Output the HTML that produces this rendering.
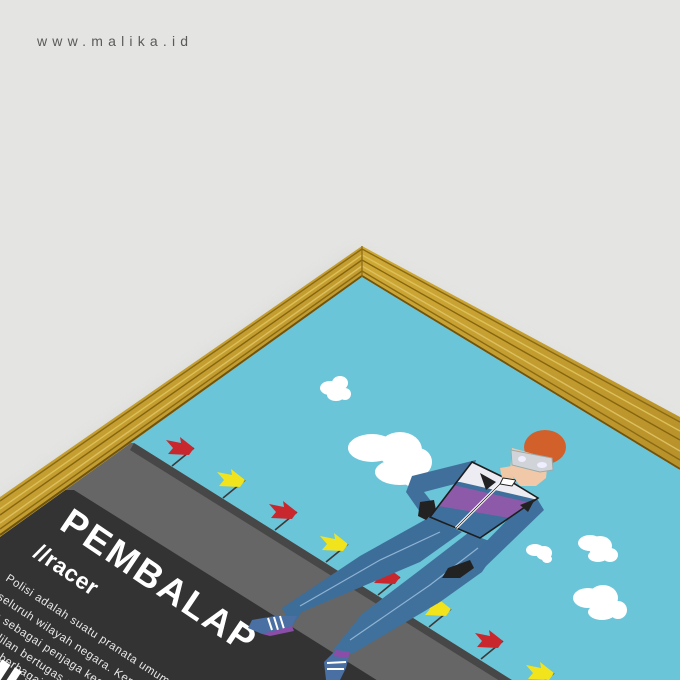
<!DOCTYPE html>
<html><head><meta charset="utf-8"><style>
html,body{margin:0;padding:0;background:#e4e4e2;width:680px;height:680px;overflow:hidden;}
svg{display:block}
</style></head><body>
<svg width="680" height="680" viewBox="0 0 680 680" xmlns="http://www.w3.org/2000/svg">
<defs>
<filter id="blur" x="-20%" y="-20%" width="140%" height="140%"><feGaussianBlur stdDeviation="9"/></filter>
<clipPath id="poster"><polygon points="362,277 680,470 680,680 0,680 0,536"/></clipPath>
<clipPath id="fl"><polygon points="362,246 0,497 0,537 362,277"/></clipPath>
<clipPath id="fr"><polygon points="362,246 680,417 680,470 362,277"/></clipPath>
<clipPath id="torso"><polygon points="472,462 505,478 538,498 480,538 430,517"/></clipPath>
<linearGradient id="gold" x1="0" y1="0" x2="1" y2="1"><stop offset="0" stop-color="#cfa936"/><stop offset="1" stop-color="#b8912a"/></linearGradient>
</defs>
<rect width="680" height="680" fill="#e4e4e2"/>
<text x="37" y="46" font-family="Liberation Sans, sans-serif" font-size="14" letter-spacing="5.2" fill="#5a5a5a">www.malika.id</text>

<polygon points="370,262 680,432 680,500 380,300" fill="#b8b8b6" opacity="0.55" filter="url(#blur)"/>
<polygon points="362,250 0,505 0,560 362,290" fill="#bcbcba" opacity="0.4" filter="url(#blur)"/>

<g clip-path="url(#poster)">
<rect width="680" height="680" fill="#6bc5d8"/>
<g fill="#fff">
<ellipse cx="330" cy="388" rx="10" ry="7"/><ellipse cx="340" cy="383" rx="8" ry="7"/><ellipse cx="345" cy="394" rx="6" ry="6"/><ellipse cx="336" cy="395" rx="9" ry="6"/>
<ellipse cx="372" cy="448" rx="24" ry="14"/><ellipse cx="400" cy="450" rx="22" ry="18"/><ellipse cx="418" cy="462" rx="14" ry="14"/><ellipse cx="400" cy="472" rx="25" ry="13"/><ellipse cx="414" cy="478" rx="12" ry="9"/>
<ellipse cx="535" cy="550" rx="9" ry="6"/><ellipse cx="544" cy="553" rx="8" ry="7"/><ellipse cx="547" cy="559" rx="5" ry="4"/>
<ellipse cx="590" cy="543" rx="12" ry="8"/><ellipse cx="600" cy="546" rx="12" ry="10"/><ellipse cx="610" cy="555" rx="8" ry="7"/><ellipse cx="598" cy="556" rx="10" ry="6"/>
<ellipse cx="588" cy="598" rx="15" ry="10"/><ellipse cx="603" cy="598" rx="15" ry="13"/><ellipse cx="618" cy="610" rx="9" ry="9"/><ellipse cx="602" cy="612" rx="14" ry="8"/>
</g>
<polygon points="134,443 700,798 -200,798 -200,443" fill="#666666"/>
<polygon points="134,443 700,798 700,806 130,450" fill="#474747"/>
<polygon points="74,490 700,883 -200,883 -200,490" fill="#333333"/>
<g>
<g transform="translate(194,446)"><line x1="0" y1="2" x2="-22" y2="20" stroke="#3a3a3a" stroke-width="1.6"/><polygon points="0,2 -14,-9 -13,-3 -28,-6 -21,2 -26,8 -5,9" fill="#c8282d"/></g>
<g transform="translate(245,478)"><line x1="0" y1="2" x2="-22" y2="20" stroke="#3a3a3a" stroke-width="1.6"/><polygon points="0,2 -14,-9 -13,-3 -28,-6 -21,2 -26,8 -5,9" fill="#f1e31c"/></g>
<g transform="translate(297,510)"><line x1="0" y1="2" x2="-22" y2="20" stroke="#3a3a3a" stroke-width="1.6"/><polygon points="0,2 -14,-9 -13,-3 -28,-6 -21,2 -26,8 -5,9" fill="#c8282d"/></g>
<g transform="translate(348,542)"><line x1="0" y1="2" x2="-22" y2="20" stroke="#3a3a3a" stroke-width="1.6"/><polygon points="0,2 -14,-9 -13,-3 -28,-6 -21,2 -26,8 -5,9" fill="#f1e31c"/></g>
<g transform="translate(400,575)"><line x1="0" y1="2" x2="-22" y2="20" stroke="#3a3a3a" stroke-width="1.6"/><polygon points="0,2 -14,-9 -13,-3 -28,-6 -21,2 -26,8 -5,9" fill="#c8282d"/></g>
<g transform="translate(451,607)"><line x1="0" y1="2" x2="-22" y2="20" stroke="#3a3a3a" stroke-width="1.6"/><polygon points="0,2 -14,-9 -13,-3 -28,-6 -21,2 -26,8 -5,9" fill="#f1e31c"/></g>
<g transform="translate(503,639)"><line x1="0" y1="2" x2="-22" y2="20" stroke="#3a3a3a" stroke-width="1.6"/><polygon points="0,2 -14,-9 -13,-3 -28,-6 -21,2 -26,8 -5,9" fill="#c8282d"/></g>
<g transform="translate(554,671)"><line x1="0" y1="2" x2="-22" y2="20" stroke="#3a3a3a" stroke-width="1.6"/><polygon points="0,2 -14,-9 -13,-3 -28,-6 -21,2 -26,8 -5,9" fill="#f1e31c"/></g>
</g>

<g font-family="Liberation Sans, DejaVu Sans, sans-serif" fill="#fff">
<text transform="translate(58,528) rotate(34)" font-size="37" font-weight="bold" letter-spacing="2.5">PEMBALAP</text>
<text transform="translate(32,556) rotate(34)" font-size="23" font-weight="bold" letter-spacing="0.5">//racer</text>
<g fill="#e8e8e8" font-size="11.5" letter-spacing="0.6">
<text transform="translate(5,580) rotate(33)">Polisi adalah suatu pranata umum sipil y</text>
<text transform="translate(-12,593) rotate(33)">diseluruh wilayah negara. Kepolisian</text>
<text transform="translate(-24,606) rotate(33)">sana sebagai penjaga keamanan</text>
<text transform="translate(-36,619) rotate(33)">pengadilan bertugas sebagai</text>
<text transform="translate(-44,632) rotate(33)">dan dari berbagai</text>
</g>
</g>
<rect x="-4" y="660" width="10" height="30" fill="#fff" transform="rotate(33 0 670)"/>
<rect x="10" y="668" width="8" height="30" fill="#fff" transform="rotate(33 14 676)"/>

<g>
<polygon points="430,517 462,532 420,562 302,612 292,626 282,608 360,556" fill="#3d6e99"/>
<polygon points="468,533 500,545 482,572 440,602 352,654 333,650 362,614 420,570" fill="#3f719c"/>
<path d="M440,532 L380,560 L300,606 M478,548 L430,585 L350,640" stroke="#8fb3d4" stroke-width="1.2" fill="none"/>
<polygon points="297,616 290,630 262,634 248,628 252,620 275,616" fill="#4a6fa3"/>
<path d="M268,618 L272,630 M274,617 L278,630 M280,616 L284,629" stroke="#fff" stroke-width="2"/>
<polygon points="292,626 262,634 270,636 294,631" fill="#8a4ea8"/>
<polygon points="350,652 346,668 340,680 326,680 324,662 336,650" fill="#4a6fa3"/>
<path d="M327,663 L346,662 M327,669 L344,669" stroke="#fff" stroke-width="2"/>
<polygon points="336,650 350,652 348,658 333,656" fill="#8a4ea8"/>
<polygon points="536,497 544,510 482,570 466,562 522,505" fill="#3f6f9c"/>
<polygon points="470,560 448,568 442,578 460,578 474,568" fill="#222"/>
<polygon points="476,460 412,476 406,492 420,512 434,505 424,492 470,480" fill="#416f9b"/>
<polygon points="420,502 434,500 436,510 426,520 418,516" fill="#222"/>
<g clip-path="url(#torso)">
<rect x="420" y="450" width="130" height="100" fill="#3f6f9c"/>
<polygon points="420,420 560,420 560,505 460,482 420,482" fill="#ececf2"/>
<polygon points="440,482 540,505 540,523 432,505" fill="#8c5aa8"/>
</g>
<polygon points="472,462 505,478 538,498 480,538 430,517" fill="none" stroke="#1e1e1e" stroke-width="1.6"/>
<line x1="504" y1="480" x2="456" y2="528" stroke="#fff" stroke-width="3"/>
<line x1="504" y1="480" x2="456" y2="528" stroke="#222" stroke-width="0.8"/>
<polygon points="480,473 496,482 486,490" fill="#222"/>
<polygon points="520,505 535,499 528,512" fill="#222"/>
<polygon points="500,468 512,466 514,482 503,483" fill="#f0c8a6"/>
<polygon points="503,478 516,480 512,486 500,484" fill="#fff" stroke="#222" stroke-width="1"/>
<ellipse cx="545" cy="447" rx="21" ry="17" fill="#d2602a"/>
<polygon points="512,448 548,458 546,478 536,486 520,486 510,472" fill="#f2c9a8"/>
<polygon points="511,450 552,458 553,470 540,472 512,465" fill="#d0d4d8" stroke="#9aa" stroke-width="1"/>
<ellipse cx="522" cy="459" rx="4" ry="3" fill="#eef"/><ellipse cx="542" cy="465" rx="5" ry="3" fill="#eef"/>
</g>
</g>

<polygon points="362,246 0,497 0,537 362,277" fill="url(#gold)"/>
<polygon points="362,246 680,417 680,470 362,277" fill="url(#gold)"/>
<g clip-path="url(#fl)" stroke-width="1.4" fill="none">
<line x1="362" y1="249" x2="0" y2="501" stroke="#8a6a14"/>
<line x1="362" y1="255" x2="0" y2="509" stroke="#dcc058"/>
<line x1="362" y1="260" x2="0" y2="515" stroke="#86650f"/>
<line x1="362" y1="266" x2="0" y2="523" stroke="#dcc060"/>
<line x1="362" y1="271" x2="0" y2="529" stroke="#8a6a14"/>
<line x1="362" y1="276" x2="0" y2="535" stroke="#6e5410" stroke-width="2"/>
</g>
<g clip-path="url(#fr)" stroke-width="1.4" fill="none">
<line x1="362" y1="249" x2="680" y2="422" stroke="#8a6a14"/>
<line x1="362" y1="255" x2="680" y2="431" stroke="#dcc058"/>
<line x1="362" y1="260" x2="680" y2="440" stroke="#86650f"/>
<line x1="362" y1="266" x2="680" y2="451" stroke="#dcc060"/>
<line x1="362" y1="271" x2="680" y2="460" stroke="#8a6a14"/>
<line x1="362" y1="276" x2="680" y2="469" stroke="#6e5410" stroke-width="2"/>
</g>
<line x1="362" y1="246" x2="362" y2="277" stroke="#8a6a14" stroke-width="1.2"/>
</svg>
</body></html>
